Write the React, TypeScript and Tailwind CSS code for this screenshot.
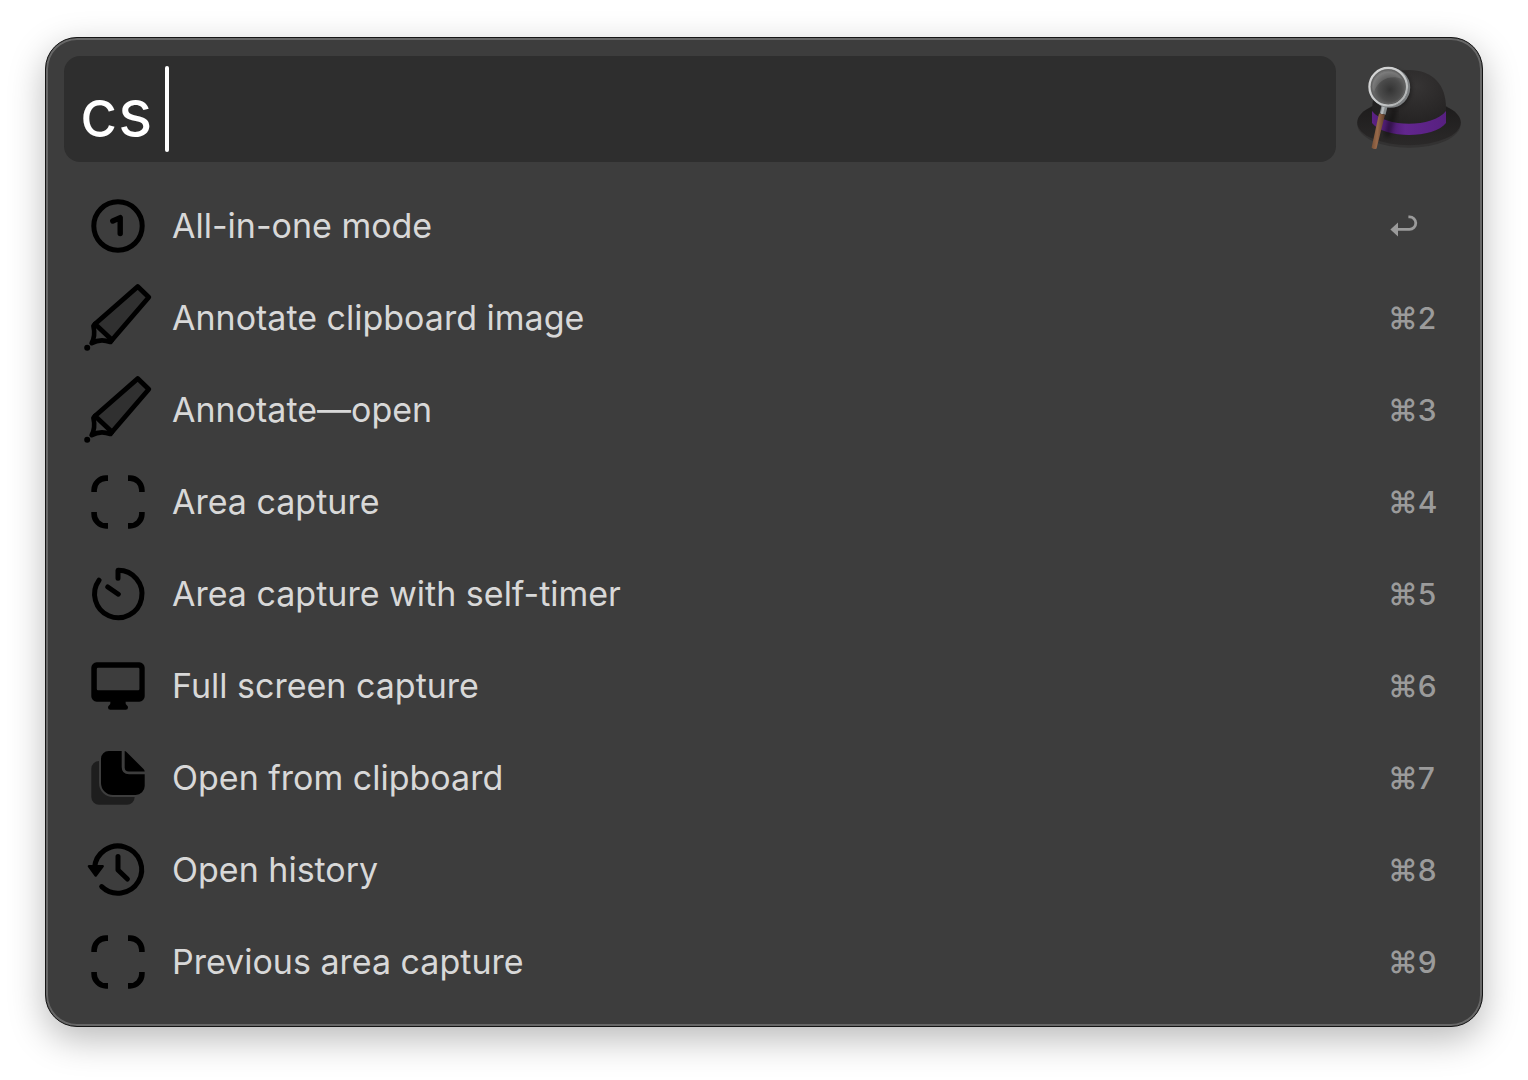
import { useState, type ReactNode } from "react";

function Glyph({ children }: { children: ReactNode }) {
  return (
    <svg viewBox="0 0 72 72" className="size-18 shrink-0" fill="none" stroke="#000" strokeWidth="5" strokeLinecap="round" strokeLinejoin="round" aria-hidden="true">
      {children}
    </svg>
  );
}

const OneIcon = () => (
  <Glyph>
    <circle cx="36" cy="36" r="24.2" />
    <path d="M30.8 31 38.2 27.6V43.6" strokeWidth="5.4" />
  </Glyph>
);

const MarkerIcon = () => (
  <Glyph>
    <path d="M55.7 4.6 66.8 15.3 30 58 13 42Z" fill="#000" fillOpacity="0.2" strokeWidth="4.8" />
    <path d="M13 42 11.4 44C13 51 12.5 56 9.6 61.2C16 57.5 22 57.5 28.5 60L30 58" strokeWidth="4.6" />
    <circle cx="5.2" cy="65.7" r="3" fill="#000" stroke="none" />
  </Glyph>
);

const FrameIcon = () => (
  <Glyph>
    <path
      strokeWidth="5.6"
      strokeLinecap="butt"
      d="M12.1 26V24A12 12 0 0 1 24 12.1H26M46 12.1H48A12 12 0 0 1 59.9 24V26M59.9 46V48A12 12 0 0 1 48 59.9H46M26 59.9H24A12 12 0 0 1 12.1 48V46"
    />
  </Glyph>
);

const TimerIcon = () => (
  <Glyph>
    <path d="M36 20.2V12.3A23.7 23.7 0 1 1 17 22.2" />
    <path d="M25.8 29 36.3 36.2" />
  </Glyph>
);

const ScreenIcon = () => (
  <Glyph>
    <path
      fill="#000"
      stroke="none"
      fillRule="evenodd"
      d="M14.7 12.3H57.3A5.4 5.4 0 0 1 62.7 17.7V46.3A5.4 5.4 0 0 1 57.3 51.7H43.6Q43.2 54.6 45 55.4Q46 56 46 57.4Q46 59.7 43.7 59.7H28.3Q26 59.7 26 57.4Q26 56 27 55.4Q28.8 54.6 28.4 51.7H14.7A5.4 5.4 0 0 1 9.3 46.3V17.7A5.4 5.4 0 0 1 14.7 12.3ZM16 17.7Q14.8 17.7 14.8 18.9V39Q14.8 40.2 16 40.2H56.2Q57.4 40.2 57.4 39V18.9Q57.4 17.7 56.2 17.7Z"
    />
  </Glyph>
);

const DocsIcon = () => (
  <Glyph>
    <g fill="#000" stroke="none">
      <path d="M26.7 9H39.7V25Q39.7 32.3 47 32.3H62.7V44A9 9 0 0 1 53.7 53H31A12 12 0 0 1 19 41V16.7A7.7 7.7 0 0 1 26.7 9Z" />
      <path d="M42.7 9Q43.5 9 44.5 10L61.5 27Q62.7 28.2 62.7 29.4H46.7Q42.7 29.4 42.7 25.4Z" />
      <path d="M17 19V41A14 14 0 0 0 31 55H52.7A7.7 7.7 0 0 1 45 62.7H17A7.7 7.7 0 0 1 9.3 55V26.7A7.7 7.7 0 0 1 17 19Z" opacity="0.5" />
    </g>
  </Glyph>
);

const HistoryIcon = () => (
  <Glyph>
    <path d="M12.5 34A23.6 23.6 0 1 1 19.7 52.6M36 22.4V36L45.4 45" />
    <path d="M7 32.3H20.6L13.7 41.4Z" fill="#000" strokeWidth="2.6" />
  </Glyph>
);

const ReturnIcon = () => (
  <svg viewBox="0 0 32 28" className="h-7 w-8" role="img" aria-label="Return">
    <path d="M2.4 17.4 10 10.4V24.4Z" fill="#9b9b9b" />
    <path d="M9 17.4H21.5A6.3 6.3 0 0 0 21.5 4.8H20.4" fill="none" stroke="#9b9b9b" strokeWidth="2.8" />
  </svg>
);

const HatLogo = () => (
  <svg viewBox="0 0 104 92" className="h-23 w-26 shrink-0" role="img" aria-label="Alfred">
    <defs>
      <radialGradient id="crown" cx="0.6" cy="0.25" r="0.8">
        <stop offset="0" stopColor="#363434" />
        <stop offset="0.6" stopColor="#282626" />
        <stop offset="1" stopColor="#1e1d1d" />
      </radialGradient>
      <linearGradient id="brim" x1="0" y1="0" x2="0" y2="1">
        <stop offset="0" stopColor="#1b1a1a" />
        <stop offset="1" stopColor="#2b2929" />
      </linearGradient>
      <linearGradient id="band" x1="0" y1="0" x2="1" y2="0">
        <stop offset="0" stopColor="#5c2286" />
        <stop offset="0.22" stopColor="#4a1b6c" />
        <stop offset="0.45" stopColor="#62268e" />
        <stop offset="1" stopColor="#572080" />
      </linearGradient>
      <radialGradient id="lens" cx="0.55" cy="0.58" r="0.6">
        <stop offset="0" stopColor="#343434" />
        <stop offset="0.5" stopColor="#4c4c4c" />
        <stop offset="1" stopColor="#848484" />
      </radialGradient>
      <linearGradient id="rim" x1="0" y1="0" x2="1" y2="1">
        <stop offset="0" stopColor="#d8d8d8" />
        <stop offset="0.6" stopColor="#c8cacb" />
        <stop offset="1" stopColor="#a4a7a8" />
      </linearGradient>
      <linearGradient id="handle" x1="0" y1="0" x2="1" y2="0.15">
        <stop offset="0" stopColor="#6e482f" />
        <stop offset="0.5" stopColor="#98694a" />
        <stop offset="1" stopColor="#5d3c28" />
      </linearGradient>
      <filter id="soft" x="-50%" y="-50%" width="200%" height="200%">
        <feGaussianBlur stdDeviation="2" />
      </filter>
    </defs>
    <ellipse cx="52" cy="61.4" rx="51.6" ry="23.4" fill="#333232" />
    <ellipse cx="52" cy="59.4" rx="51.8" ry="22.8" fill="url(#brim)" />
    <path d="M15 50C15 18 30 7 52 7C76 7 89 22 89 45V60C76 76 28 76 15 60Z" fill="url(#crown)" />
    <path d="M15 48C28 65 76 65 89 48V60C77 76 27 76 15 60Z" fill="url(#band)" />
    <path d="M38 45 30 74" stroke="#000" strokeWidth="6" opacity="0.35" filter="url(#soft)" />
    <circle cx="35" cy="26" r="19" fill="#000" opacity="0.4" filter="url(#soft)" />
    <path d="M27.8 42 25.6 51" stroke="#858a8c" strokeWidth="6" />
    <path d="M27 42 24.8 51" stroke="#b4b8ba" strokeWidth="2.4" />
    <path d="M22 50.4 28 51.8 19.6 85.4Q17 87.2 14.6 84.4Z" fill="url(#handle)" />
    <circle cx="33" cy="24.6" r="19" fill="none" stroke="#7b7e80" strokeWidth="2.4" />
    <circle cx="31.2" cy="23.7" r="18.8" fill="url(#lens)" stroke="url(#rim)" strokeWidth="2.2" />
    <path d="M15.5 25A16 16 0 0 1 45 16C35 12 22 15 17 29Z" fill="#fff" opacity="0.1" />
    <circle cx="31.2" cy="23.7" r="16.8" fill="none" stroke="#606060" strokeWidth="1" />
  </svg>
);

const results = [
  { title: "All-in-one mode", Icon: OneIcon, key: "" },
  { title: "Annotate clipboard image", Icon: MarkerIcon, key: "2" },
  { title: "Annotate—open", Icon: MarkerIcon, key: "3" },
  { title: "Area capture", Icon: FrameIcon, key: "4" },
  { title: "Area capture with self-timer", Icon: TimerIcon, key: "5" },
  { title: "Full screen capture", Icon: ScreenIcon, key: "6" },
  { title: "Open from clipboard", Icon: DocsIcon, key: "7" },
  { title: "Open history", Icon: HistoryIcon, key: "8" },
  { title: "Previous area capture", Icon: FrameIcon, key: "9" },
];

export default function App() {
  const [query, setQuery] = useState("cs ");

  return (
    <main className="min-h-screen bg-white px-[45px] pt-[37px] pb-[53px] font-['Inter',sans-serif]">
      <section className="rounded-[32px] border border-[#151515] bg-[#3d3d3d] shadow-[0_12px_36px_rgba(0,0,0,0.28),inset_0_0_0_2px_#676767]">
        <header className="flex items-center gap-[21px] pt-[18px] pr-[21px] pl-[18px]">
          <div className="relative h-[106px] min-w-0 flex-1 rounded-2xl bg-[#2e2e2e]">
            <input
              type="text"
              aria-label="Search"
              value={query}
              onChange={(e) => setQuery(e.target.value)}
              className="h-full w-full bg-transparent px-4 pt-1.5 text-[66px] text-white caret-transparent outline-none"
            />
            <div className="pointer-events-none absolute inset-y-[10px] left-[101px] w-1 rounded-full bg-white" aria-hidden="true" />
          </div>
          <HatLogo />
        </header>
        <ul className="pt-[18px] pb-[18px]">
          {results.map(({ title, Icon, key }) => (
            <li key={title}>
              <button type="button" className="flex h-[92px] w-full items-center pr-12 pl-9 text-left">
                <Icon />
                <span className="ml-[18px] flex-1 pb-0.5 text-[34px] text-[#d8d8d8]">{title}</span>
                <span className="w-[46px] text-[30px] font-medium whitespace-nowrap text-[#9b9b9b]">
                  {key ? `⌘${key}` : <ReturnIcon />}
                </span>
              </button>
            </li>
          ))}
        </ul>
      </section>
    </main>
  );
}
